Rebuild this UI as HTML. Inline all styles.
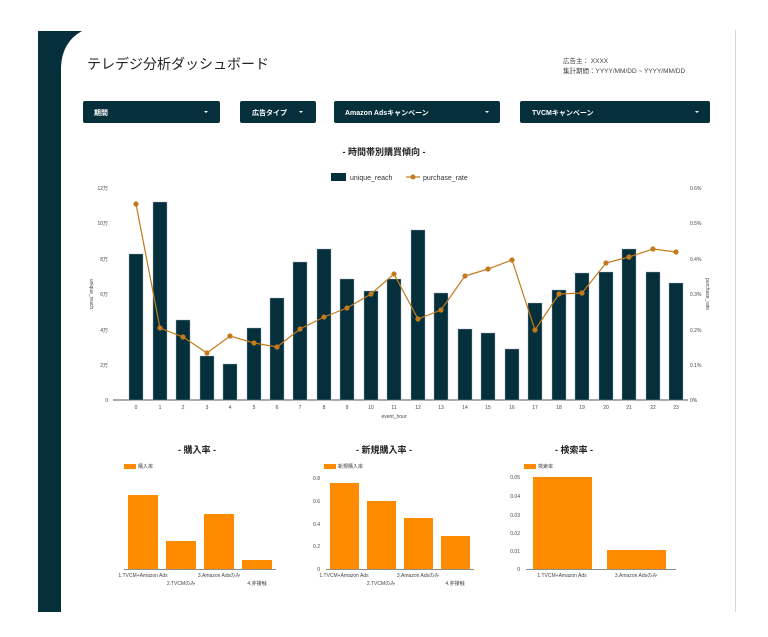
<!DOCTYPE html>
<html><head><meta charset="utf-8"><style>
html,body{margin:0;padding:0;background:#fff;}
svg{display:block;font-family:"Liberation Sans","Noto Sans CJK JP",sans-serif;}
</style></head><body>
<svg width="768" height="637" viewBox="0 0 768 637" xmlns="http://www.w3.org/2000/svg">
<rect width="768" height="637" fill="#fff"/>
<path d="M38,612 L38,31 L82,31 Q62,42 61,67 L61,612 Z" fill="#062f3c"/>
<line x1="735.5" y1="30" x2="735.5" y2="612" stroke="#d8d8d8" stroke-width="1"/>
<text x="87" y="69" font-size="14" fill="#222">テレデジ分析ダッシュボード</text>
<text x="563" y="63" font-size="6.5" fill="#444">広告主： XXXX</text>
<text x="563" y="73" font-size="6.5" fill="#444">集計期間：YYYY/MM/DD ~ YYYY/MM/DD</text>
<g fill="#062f3c">
<rect x="83" y="101" width="137" height="22" rx="2"/>
<rect x="240" y="101" width="76" height="22" rx="2"/>
<rect x="334" y="101" width="166" height="22" rx="2"/>
<rect x="520" y="101" width="190" height="22" rx="2"/>
</g>
<g fill="#fff" font-size="7" font-weight="bold">
<text x="94" y="115">期間</text>
<text x="252" y="115">広告タイプ</text>
<text x="345" y="115">Amazon Adsキャンペーン</text>
<text x="532" y="115">TVCMキャンペーン</text>
</g>
<g fill="#fff"><path d="M204,111h4l-2,2z"/><path d="M299,111h4l-2,2z"/><path d="M485,111h4l-2,2z"/><path d="M695,111h4l-2,2z"/></g>
<text x="384" y="155" font-size="9" font-weight="bold" text-anchor="middle" fill="#222">- 時間帯別購買傾向 -</text>
<rect x="331" y="173" width="15" height="8" fill="#062f3c"/>
<text x="350" y="180" font-size="7" fill="#333">unique_reach</text>
<line x1="406" y1="177" x2="420" y2="177" stroke="#c47a1c" stroke-width="1.2"/><circle cx="413" cy="177" r="2.5" fill="#c47a1c"/>
<text x="423" y="180" font-size="7" fill="#333">purchase_rate</text>
<g font-size="5" fill="#444" text-anchor="end">
<text x="108" y="190">12万</text><text x="108" y="225">10万</text><text x="108" y="261">8万</text><text x="108" y="296">6万</text><text x="108" y="332">4万</text><text x="108" y="367">2万</text><text x="108" y="402">0</text>
</g>
<g font-size="5" fill="#444">
<text x="690" y="190">0.6%</text><text x="690" y="225">0.5%</text><text x="690" y="261">0.4%</text><text x="690" y="296">0.3%</text><text x="690" y="332">0.2%</text><text x="690" y="367">0.1%</text><text x="690" y="402">0%</text>
</g>
<text x="90" y="294" font-size="5" fill="#444" transform="rotate(90 90 294)" text-anchor="middle">unique_reach</text>
<text x="706" y="294" font-size="5" fill="#444" transform="rotate(90 706 294)" text-anchor="middle">purchase_rate</text>
<line x1="113" y1="400" x2="688" y2="400" stroke="#555" stroke-width="1"/>
<g fill="#062f3c" stroke="#9ab" stroke-width="0.4">
<rect x="129" y="254" width="14" height="146"/>
<rect x="153" y="202" width="14" height="198"/>
<rect x="176" y="320" width="14" height="80"/>
<rect x="200" y="356" width="14" height="44"/>
<rect x="223" y="364" width="14" height="36"/>
<rect x="247" y="328" width="14" height="72"/>
<rect x="270" y="298" width="14" height="102"/>
<rect x="293" y="262" width="14" height="138"/>
<rect x="317" y="249" width="14" height="151"/>
<rect x="340" y="279" width="14" height="121"/>
<rect x="364" y="291" width="14" height="109"/>
<rect x="387" y="279" width="14" height="121"/>
<rect x="411" y="230" width="14" height="170"/>
<rect x="434" y="293" width="14" height="107"/>
<rect x="458" y="329" width="14" height="71"/>
<rect x="481" y="333" width="14" height="67"/>
<rect x="505" y="349" width="14" height="51"/>
<rect x="528" y="303" width="14" height="97"/>
<rect x="552" y="290" width="14" height="110"/>
<rect x="575" y="273" width="14" height="127"/>
<rect x="599" y="272" width="14" height="128"/>
<rect x="622" y="249" width="14" height="151"/>
<rect x="646" y="272" width="14" height="128"/>
<rect x="669" y="283" width="14" height="117"/>
</g>
<polyline fill="none" stroke="#c47a1c" stroke-width="1.2" points="136,204 160,328 183,337 207,353 230,336 254,343 277,347 300,329 324,317 347,308 371,294 394,274 418,319 441,310 465,276 488,269 512,260 535,330 559,294 582,293 606,263 629,257 653,249 676,252"/>
<g fill="#c47a1c">
<circle cx="136" cy="204" r="2.6"/><circle cx="160" cy="328" r="2.6"/><circle cx="183" cy="337" r="2.6"/><circle cx="207" cy="353" r="2.6"/><circle cx="230" cy="336" r="2.6"/><circle cx="254" cy="343" r="2.6"/><circle cx="277" cy="347" r="2.6"/><circle cx="300" cy="329" r="2.6"/><circle cx="324" cy="317" r="2.6"/><circle cx="347" cy="308" r="2.6"/><circle cx="371" cy="294" r="2.6"/><circle cx="394" cy="274" r="2.6"/><circle cx="418" cy="319" r="2.6"/><circle cx="441" cy="310" r="2.6"/><circle cx="465" cy="276" r="2.6"/><circle cx="488" cy="269" r="2.6"/><circle cx="512" cy="260" r="2.6"/><circle cx="535" cy="330" r="2.6"/><circle cx="559" cy="294" r="2.6"/><circle cx="582" cy="293" r="2.6"/><circle cx="606" cy="263" r="2.6"/><circle cx="629" cy="257" r="2.6"/><circle cx="653" cy="249" r="2.6"/><circle cx="676" cy="252" r="2.6"/>
</g>
<g font-size="5" fill="#444" text-anchor="middle">
<text x="136" y="409">0</text><text x="160" y="409">1</text><text x="183" y="409">2</text><text x="207" y="409">3</text><text x="230" y="409">4</text><text x="254" y="409">5</text><text x="277" y="409">6</text><text x="300" y="409">7</text><text x="324" y="409">8</text><text x="347" y="409">9</text><text x="371" y="409">10</text><text x="394" y="409">11</text><text x="418" y="409">12</text><text x="441" y="409">13</text><text x="465" y="409">14</text><text x="488" y="409">15</text><text x="512" y="409">16</text><text x="535" y="409">17</text><text x="559" y="409">18</text><text x="582" y="409">19</text><text x="606" y="409">20</text><text x="629" y="409">21</text><text x="653" y="409">22</text><text x="676" y="409">23</text>
<text x="394" y="418">event_hour</text>
</g>
<g font-size="9" font-weight="bold" fill="#222" text-anchor="middle">
<text x="197" y="453">- 購入率 -</text>
<text x="384" y="453">- 新規購入率 -</text>
<text x="574" y="453">- 検索率 -</text>
</g>
<g fill="#ff8c00">
<rect x="124" y="464" width="12" height="5"/><rect x="324" y="464" width="12" height="5"/><rect x="524" y="464" width="12" height="5"/>
<rect x="128" y="495" width="30" height="74"/><rect x="166" y="541" width="30" height="28"/><rect x="204" y="514" width="30" height="55"/><rect x="242" y="560" width="30" height="9"/>
<rect x="330" y="483" width="29" height="86"/><rect x="367" y="501" width="29" height="68"/><rect x="404" y="518" width="29" height="51"/><rect x="441" y="536" width="29" height="33"/>
<rect x="533" y="477" width="59" height="92"/><rect x="607" y="550" width="59" height="19"/>
</g>
<g font-size="5" fill="#444">
<text x="138" y="468">購入率</text><text x="338" y="468">新規購入率</text><text x="538" y="468">検索率</text>
</g>
<g stroke="#666" stroke-width="0.7"><line x1="124" y1="569.5" x2="276" y2="569.5"/><line x1="326" y1="569.5" x2="474" y2="569.5"/><line x1="526" y1="569.5" x2="676" y2="569.5"/></g>
<g font-size="5" fill="#444" text-anchor="end">
<text x="320" y="480">0.8</text><text x="320" y="503">0.6</text><text x="320" y="526">0.4</text><text x="320" y="548">0.2</text><text x="320" y="571">0</text>
<text x="520" y="479">0.05</text><text x="520" y="498">0.04</text><text x="520" y="517">0.03</text><text x="520" y="535">0.02</text><text x="520" y="553">0.01</text><text x="520" y="571">0</text>
</g>
<g font-size="5" fill="#444" text-anchor="middle">
<text x="143" y="577">1.TVCM+Amazon Ads</text><text x="181" y="585">2.TVCMのみ</text><text x="219" y="577">3.Amazon Adsのみ</text><text x="257" y="585">4.非接触</text>
<text x="344" y="577">1.TVCM+Amazon Ads</text><text x="381" y="585">2.TVCMのみ</text><text x="418" y="577">3.Amazon Adsのみ</text><text x="455" y="585">4.非接触</text>
<text x="562" y="577">1.TVCM+Amazon Ads</text><text x="636" y="577">3.Amazon Adsのみ</text>
</g>
</svg>
</body></html>
